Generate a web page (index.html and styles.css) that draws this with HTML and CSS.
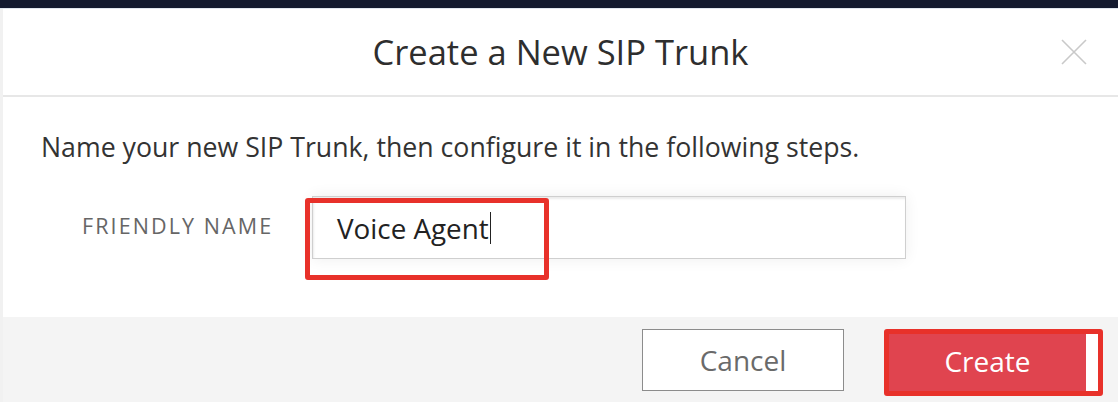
FILE: index.html
```html
<!DOCTYPE html>
<html lang="en">
<head>
<meta charset="utf-8">
<title>Create a New SIP Trunk</title>
<link rel="stylesheet" href="styles.css">
</head>
<body>
<div class="topbar"></div>
<div class="modal">
  <header class="modal-header">
    <span class="spacer"></span>
    <h1 class="modal-title">Create a New SIP Trunk</h1>
    <button class="close" aria-label="Close">
      <svg width="26" height="26" viewBox="0 0 26 26"><path d="M1 1L25 25M25 1L1 25" stroke="#c9c9c9" stroke-width="1.6" fill="none"/></svg>
    </button>
  </header>
  <div class="modal-body">
    <p class="intro">Name your new SIP Trunk, then configure it in the following steps.</p>
    <div class="form-row">
      <label class="field-label" for="fname">FRIENDLY NAME</label>
      <div class="input-wrap">
        <div class="text-input" id="fname"><span>Voice Agent</span><span class="caret"></span></div>
        <div class="annot annot-input"></div>
      </div>
    </div>
  </div>
  <footer class="modal-footer">
    <button class="btn btn-cancel">Cancel</button>
    <div class="create-annot">
      <button class="btn btn-create">Create</button>
      <span class="white-strip"></span>
    </div>
  </footer>
</div>
</body>
</html>
```

FILE: styles.css
```css
* { box-sizing: border-box; }
html, body { margin: 0; padding: 0; }
body {
  width: 1118px;
  height: 402px;
  overflow: hidden;
  background: #ffffff;
  font-family: "Open Sans", "Liberation Sans", sans-serif;
  color: #333333;
}
.topbar {
  height: 9px;
  background: #131a2f;
  border-bottom: 1px solid #dfe6ee;
}
.modal {
  border-left: 3px solid #f1f1f1;
  display: flex;
  flex-direction: column;
  height: 393px;
}
.modal-header {
  height: 88px;
  border-bottom: 2px solid #e7e7e7;
  display: grid;
  grid-template-columns: 1fr auto 1fr;
  align-items: center;
}
.modal-title {
  margin: 0;
  font-weight: 400;
  font-size: 34.5px;
  color: #2e2e2e;
  letter-spacing: 0;
  padding-bottom: 2px;
}
.close {
  justify-self: end;
  margin-right: 31px;
  background: none;
  border: 0;
  padding: 0;
  width: 26px;
  height: 26px;
  display: flex;
}
.modal-body {
  padding: 33px 0 0 38px;
  flex: 1;
}
.intro {
  margin: 0;
  font-size: 26.7px;
  line-height: 34px;
  color: #333333;
}
.form-row {
  margin-top: 32px;
  display: flex;
  align-items: center;
  padding-left: 41px;
}
.field-label {
  width: 230px;
  font-size: 21.5px;
  letter-spacing: 2.1px;
  color: #666666;
  padding-bottom: 4px;
}
.input-wrap {
  position: relative;
}
.text-input {
  width: 594px;
  height: 63px;
  border: 1px solid #cfcfcf;
  background: #fff;
  box-shadow: inset 1px 2px 2px rgba(0,0,0,0.08), 0 0 14px rgba(0,0,0,0.07);
  display: flex;
  align-items: center;
  padding-left: 24px;
  font-size: 27.8px;
  color: #222;
}
.caret {
  display: inline-block;
  width: 1.5px;
  height: 32px;
  background: #222;
  margin-left: 1px;
}
.annot {
  position: absolute;
  border: 5px solid #e8312a;
  border-radius: 3px;
}
.annot-input {
  left: -7px;
  top: 2px;
  width: 244px;
  height: 82px;
}
.modal-footer {
  height: 85px;
  background: #f4f4f4;
  display: flex;
  justify-content: flex-end;
  align-items: flex-start;
  padding: 12px 15px 0 0;
}
.btn {
  font-family: "Open Sans", "Liberation Sans", sans-serif;
  font-size: 28px;
  cursor: pointer;
}
.btn-cancel {
  width: 202px;
  height: 62px;
  background: #fff;
  border: 1px solid #8c8c8c;
  color: #6a6a6a;
  margin-right: 40px;
}
.create-annot {
  display: flex;
  width: 219px;
  height: 67px;
  border: 5px solid #e8312a;
  border-radius: 3px;
}
.btn-create {
  width: 197px;
  height: 100%;
  background: #e0444f;
  border: 0;
  color: #fff;
  padding: 0 0 4px 0;
}
.white-strip {
  flex: 1;
  background: #ffffff;
}
```
